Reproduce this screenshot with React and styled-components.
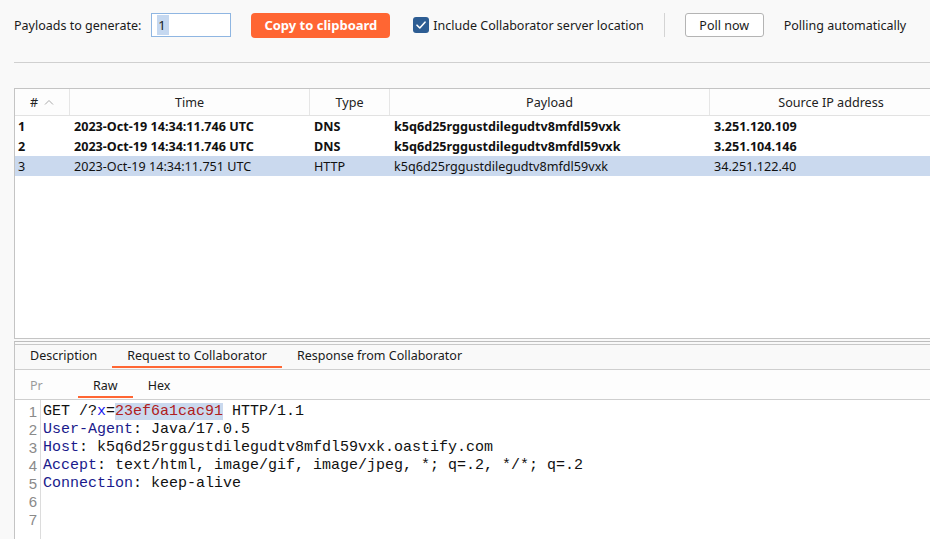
import React from "react";
import styled, { createGlobalStyle } from "styled-components";

const GlobalStyle = createGlobalStyle`
  html, body {
    margin: 0;
    padding: 0;
    background: #f9f9f9;
    overflow: hidden;
  }
  body {
    font-family: "Noto Sans", "Open Sans", sans-serif;
    color: #1a1a1a;
  }
`;

const rows = [
  { id: 1, time: "2023-Oct-19 14:34:11.746 UTC", type: "DNS", payload: "k5q6d25rggustdilegudtv8mfdl59vxk", ip: "3.251.120.109", unread: true },
  { id: 2, time: "2023-Oct-19 14:34:11.746 UTC", type: "DNS", payload: "k5q6d25rggustdilegudtv8mfdl59vxk", ip: "3.251.104.146", unread: true },
  { id: 3, time: "2023-Oct-19 14:34:11.751 UTC", type: "HTTP", payload: "k5q6d25rggustdilegudtv8mfdl59vxk", ip: "34.251.122.40", selected: true },
];

const codeLines = [
  [{ t: "GET /?" }, { t: "x", k: "param" }, { t: "=" }, { t: "23ef6a1cac91", k: "value" }, { t: " HTTP/1.1" }],
  [{ t: "User-Agent", k: "header" }, { t: ": Java/17.0.5" }],
  [{ t: "Host", k: "header" }, { t: ": k5q6d25rggustdilegudtv8mfdl59vxk.oastify.com" }],
  [{ t: "Accept", k: "header" }, { t: ": text/html, image/gif, image/jpeg, *; q=.2, */*; q=.2" }],
  [{ t: "Connection", k: "header" }, { t: ": keep-alive" }],
  [],
  [],
];

const App = () => {
  return (
    <Page>
      <GlobalStyle />
      <TopBar>
        <Label>Payloads to generate:</Label>
        <Field>
          <Selected>1</Selected>
        </Field>
        <CopyButton>Copy to clipboard</CopyButton>
        <CheckRow>
          <CheckBox>
            <svg width="10" height="8" viewBox="0 0 10 8">
              <path d="M1 4.2 L3.8 7 L9 1.2" fill="none" stroke="#fff" strokeWidth="1.6" strokeLinecap="round" strokeLinejoin="round" />
            </svg>
          </CheckBox>
          <Label>Include Collaborator server location</Label>
        </CheckRow>
        <VSep />
        <PollButton>Poll now</PollButton>
        <Label>Polling automatically</Label>
      </TopBar>
      <Rule />

      <TablePanel>
        <HeaderRow>
          <HeadCell>
            #
            <SortIcon width="10" height="6" viewBox="0 0 10 6">
              <path d="M1 5.5 L5 1.5 L9 5.5" fill="none" stroke="#aaa" strokeWidth="1" />
            </SortIcon>
          </HeadCell>
          <HeadCell>Time</HeadCell>
          <HeadCell>Type</HeadCell>
          <HeadCell>Payload</HeadCell>
          <HeadCell $last>Source IP address</HeadCell>
        </HeaderRow>
        {rows.map((r) => (
          <Row key={r.id} $selected={r.selected} $bold={r.unread}>
            <Cell>{r.id}</Cell>
            <Cell>{r.time}</Cell>
            <Cell>{r.type}</Cell>
            <Cell>{r.payload}</Cell>
            <Cell>{r.ip}</Cell>
          </Row>
        ))}
      </TablePanel>

      <DetailPanel>
        <TabBar>
          <Tab>Description</Tab>
          <Tab $active>Request to Collaborator</Tab>
          <Tab>Response from Collaborator</Tab>
        </TabBar>
        <SubTabBar>
          <SubTab $muted>Pr</SubTab>
          <SubTab $active>Raw</SubTab>
          <SubTab>Hex</SubTab>
        </SubTabBar>
        <Editor>
          <Gutter>
            {codeLines.map((_, i) => (
              <LineNo key={i}>{i + 1}</LineNo>
            ))}
          </Gutter>
          <Code>
            {codeLines.map((line, i) => (
              <CodeLine key={i}>
                {line.map((seg, j) => (
                  <Token key={j} $kind={seg.k}>
                    {seg.t}
                  </Token>
                ))}
              </CodeLine>
            ))}
          </Code>
        </Editor>
      </DetailPanel>
    </Page>
  );
};

export default App;

const Page = styled.div`
  width: 930px;
  height: 539px;
  display: flex;
  flex-direction: column;
  overflow: hidden;
`;

const TopBar = styled.div`
  display: flex;
  align-items: center;
  height: 50px;
  padding-left: 14px;
  white-space: nowrap;
`;

const Label = styled.span`
  font-size: 12.5px;
  color: #1a1a1a;
`;

const Field = styled.div`
  box-sizing: border-box;
  margin-left: 10px;
  width: 80px;
  height: 24px;
  border: 1px solid #8fb6e2;
  background: #fff;
  display: flex;
  align-items: center;
  padding-left: 5px;
`;

const Selected = styled.span`
  background: #c5d8f0;
  font-size: 13px;
  line-height: 20px;
  padding: 0 3px 0 1px;
`;

const CopyButton = styled.button`
  margin-left: 20px;
  width: 139px;
  height: 25px;
  border: none;
  border-radius: 4px;
  background: #ff6633;
  color: #fff;
  font-family: inherit;
  font-weight: 700;
  font-size: 13px;
  padding: 0;
`;

const CheckRow = styled.div`
  display: flex;
  align-items: center;
  margin-left: 23px;
  gap: 4px;
`;

const CheckBox = styled.span`
  width: 16px;
  height: 16px;
  border-radius: 3px;
  background: #2d5d93;
  display: flex;
  align-items: center;
  justify-content: center;
`;

const VSep = styled.span`
  width: 1px;
  height: 24px;
  background: #d4d4d4;
  margin: 0 20px 0 20px;
`;

const PollButton = styled.button`
  box-sizing: border-box;
  width: 79px;
  height: 24px;
  border: 1px solid #b4b4b4;
  border-radius: 3px;
  background: #fff;
  font-family: inherit;
  font-size: 12.5px;
  color: #1a1a1a;
  padding: 0;
  margin-right: 20px;
`;

const Rule = styled.div`
  margin: 12px 0 0 14px;
  height: 1px;
  background: #d0d0d0;
`;

const TablePanel = styled.div`
  box-sizing: border-box;
  margin: 25px 0 0 14px;
  height: 251px;
  background: #fff;
  border: 1px solid #c4c4c4;
  border-right: none;
  overflow: hidden;
  font-size: 12.6px;
`;

const grid = `
  display: grid;
  grid-template-columns: 55px 240px 80px 320px 242px;
`;

const HeaderRow = styled.div`
  ${grid}
  height: 26px;
  border-bottom: 1px solid #e2e2e2;
  background: #fdfdfd;
`;

const HeadCell = styled.div`
  display: flex;
  align-items: center;
  justify-content: center;
  font-size: 12.6px;
  color: #222;
  white-space: nowrap;
  border-right: ${(p) => (p.$last ? "none" : "1px solid #e6e6e6")};
`;

const SortIcon = styled.svg`
  margin-left: 6px;
`;

const Row = styled.div`
  ${grid}
  height: 20px;
  align-items: center;
  background: ${(p) => (p.$selected ? "#cad9ee" : "transparent")};
  font-weight: ${(p) => (p.$bold ? 700 : 400)};
`;

const Cell = styled.div`
  padding-left: 3px;
  white-space: nowrap;
  overflow: hidden;
  color: #111;
  & + & {
    padding-left: 4px;
  }
`;

const DetailPanel = styled.div`
  flex: 1;
  margin: 2px 0 0 14px;
  border-top: 1px solid #bdbdbd;
  border-left: 1px solid #c4c4c4;
  padding-top: 2px;
  display: flex;
  flex-direction: column;
`;

const TabBar = styled.div`
  display: flex;
  height: 24px;
  border-top: 1px solid #c8c8c8;
  border-bottom: 1px solid #cfcfcf;
  background: #f9f9f9;
`;

const Tab = styled.div`
  box-sizing: border-box;
  padding: 0 15px;
  height: 23px;
  display: flex;
  align-items: center;
  font-size: 12.5px;
  color: #1a1a1a;
  border-bottom: 2px solid ${(p) => (p.$active ? "#ff6633" : "transparent")};
`;

const SubTabBar = styled.div`
  display: flex;
  height: 29px;
  background: #fdfdfd;
  border-bottom: 1px solid #cfcfcf;
`;

const SubTab = styled.div`
  box-sizing: border-box;
  padding: 5px 15px 0;
  height: 28px;
  display: flex;
  align-items: center;
  font-size: 12.5px;
  color: ${(p) => (p.$muted ? "#9a9a9a" : "#1a1a1a")};
  width: ${(p) => (p.$muted ? "63px" : "auto")};
  border-bottom: 2px solid ${(p) => (p.$active ? "#ff6633" : "transparent")};
`;

const Editor = styled.div`
  flex: 1;
  display: flex;
  background: #fff;
`;

const Gutter = styled.div`
  width: 25px;
  border-right: 1px solid #dcdcdc;
  padding-top: 3px;
  display: flex;
  flex-direction: column;
  align-items: flex-end;
`;

const LineNo = styled.div`
  height: 18px;
  line-height: 18px;
  padding-right: 3px;
  font-family: "Liberation Sans", Arial, sans-serif;
  font-size: 15px;
  color: #8a8a8a;
`;

const Code = styled.div`
  padding: 3px 0 0 2px;
  font-family: "Liberation Mono", "Courier New", monospace;
  font-size: 15px;
  color: #111;
`;

const CodeLine = styled.div`
  height: 18px;
  line-height: 18px;
  white-space: pre;
`;

const tokenColors = {
  param: "#1a1aee",
  value: "#b02020",
  header: "#1a1a8c",
};

const Token = styled.span`
  color: ${(p) => tokenColors[p.$kind] || "#111"};
  background: ${(p) => (p.$kind === "value" ? "#cad9ee" : "transparent")};
`;
